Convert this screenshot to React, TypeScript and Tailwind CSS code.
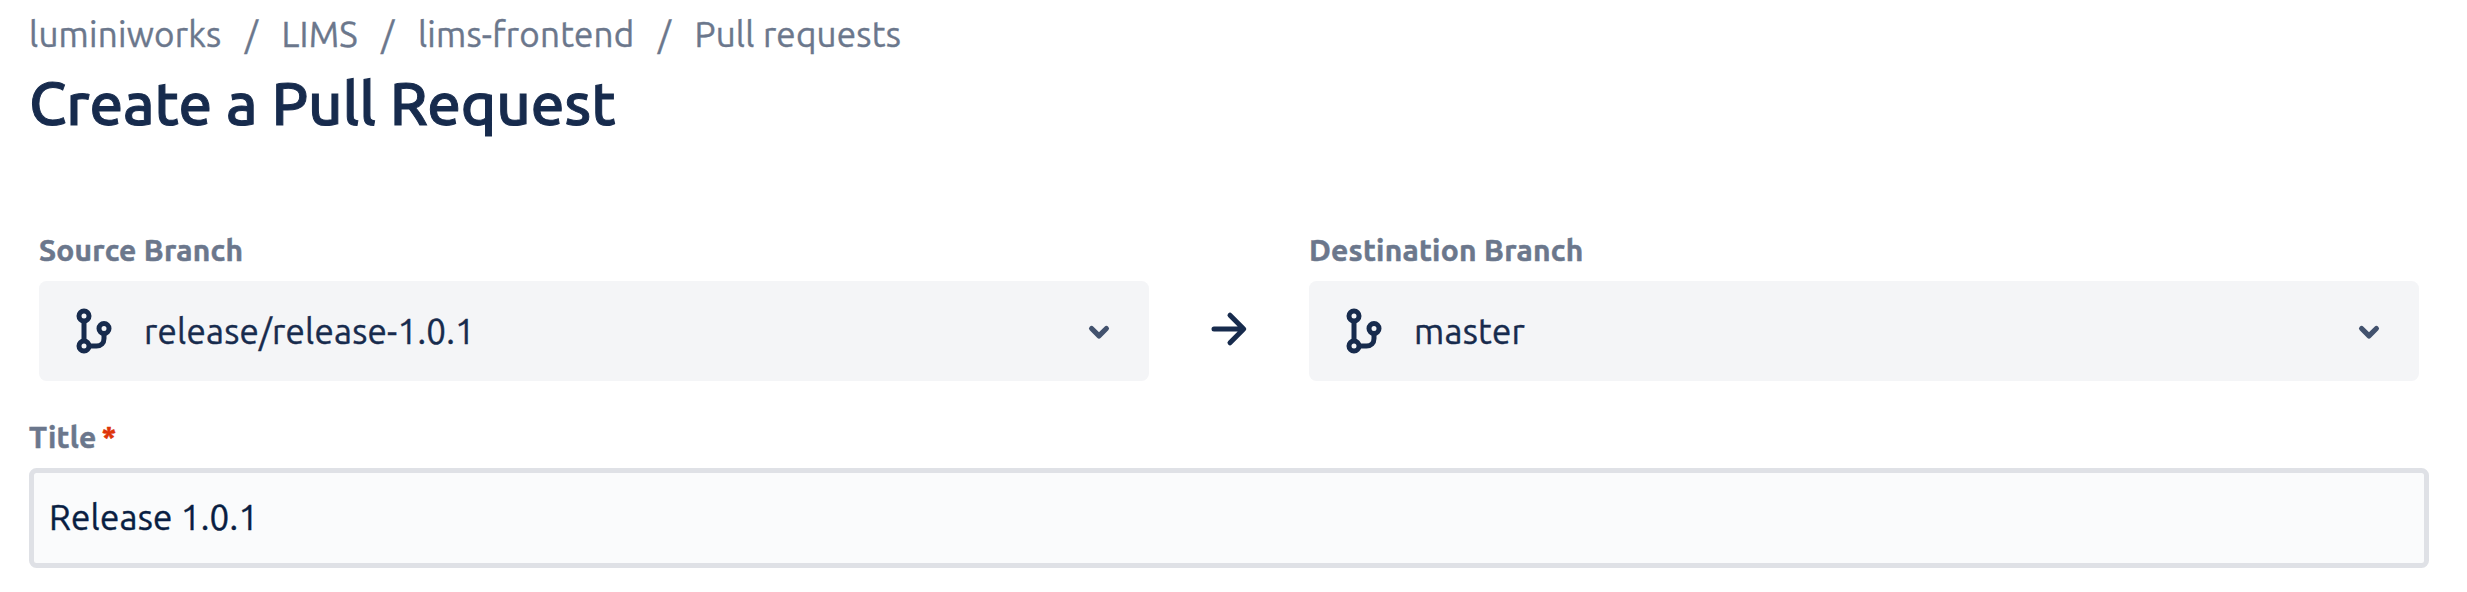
function BranchIcon() {
  return (
    <svg className="h-[60px] w-[60px] shrink-0" viewBox="0 0 60 60" fill="none" stroke="#172B4D" strokeWidth="5">
      <circle cx="20" cy="15" r="5" />
      <circle cx="20" cy="45" r="5" />
      <circle cx="40" cy="27.5" r="5" />
      <path d="M20 20V40M25 45H32.5C37 45 40 42 40 37.5V32.5" />
    </svg>
  );
}

function ChevronIcon() {
  return (
    <svg className="h-[60px] w-[60px] shrink-0" viewBox="0 0 60 60" fill="none" stroke="#42526E" strokeWidth="5.2" strokeLinecap="round" strokeLinejoin="round">
      <path d="M22.6 27.5L30 34.9L37.4 27.5" />
    </svg>
  );
}

function ArrowIcon() {
  return (
    <svg className="mt-[69px] h-[60px] w-[60px]" viewBox="0 0 60 60" fill="none" stroke="#172B4D" strokeWidth="5" strokeLinecap="round" strokeLinejoin="round">
      <path d="M15 30H44M31 16.2L44.7 30L31 43.8" />
    </svg>
  );
}

function BranchField({ label, branch }: { label: string; branch: string }) {
  return (
    <div className="w-[1110px]">
      <div className="h-[51px] text-[30px] leading-[40px] font-bold text-[#6B778C] [-webkit-text-stroke:0.5px]">{label}</div>
      <button type="button" className="flex h-[100px] w-full items-center rounded-[7.5px] bg-[#F4F5F7] pr-5 pl-[25px] tracking-[0.22px]">
        <BranchIcon />
        <span className="ml-5 flex-1 text-left text-[35px] leading-[50px]">{branch}</span>
        <ChevronIcon />
      </button>
    </div>
  );
}

const crumbs = ['luminiworks', 'LIMS', 'lims-frontend', 'Pull requests'];

export default function App() {
  return (
    <main className="h-[592px] w-[2467px] bg-white pt-1 pl-[29px] font-[Ubuntu,'Noto_Sans',sans-serif] tracking-[0.22px] text-[#172B4D] [-webkit-text-stroke:0.4px]">
      <nav className="flex h-16 text-[35px] leading-[60px] text-[#6B778C]">
        {crumbs.map((crumb, i) => (
          <div key={crumb} className="flex">
            {i > 0 && <span className="w-[60px] text-center">/</span>}
            <span>{crumb}</span>
          </div>
        ))}
      </nav>
      <h1 className="text-[60px] leading-[70px] font-medium tracking-[-0.13px] [-webkit-text-stroke:1px]">Create a Pull Request</h1>
      <section className="mt-[92px] flex w-[2400px] justify-between px-[10px]">
        <BranchField label="Source Branch" branch="release/release-1.0.1" />
        <ArrowIcon />
        <BranchField label="Destination Branch" branch="master" />
      </section>
      <label className="mt-9 block w-[2400px]">
        <span className="flex h-[51px] text-[30px] leading-[40px] font-bold text-[#6B778C] [-webkit-text-stroke:0.5px]">
          Title<span className="ml-[5px] text-[#DE350B]">*</span>
        </span>
        <input
          className="block h-[100px] w-full rounded-[7.5px] border-[5px] border-[#DFE1E6] bg-[#FAFBFC] px-[15px] pb-[3px] text-[35px] leading-[50px] tracking-[0.22px] text-[#091E42] outline-none [-webkit-text-stroke:0.4px]"
          defaultValue="Release 1.0.1"
        />
      </label>
    </main>
  );
}
